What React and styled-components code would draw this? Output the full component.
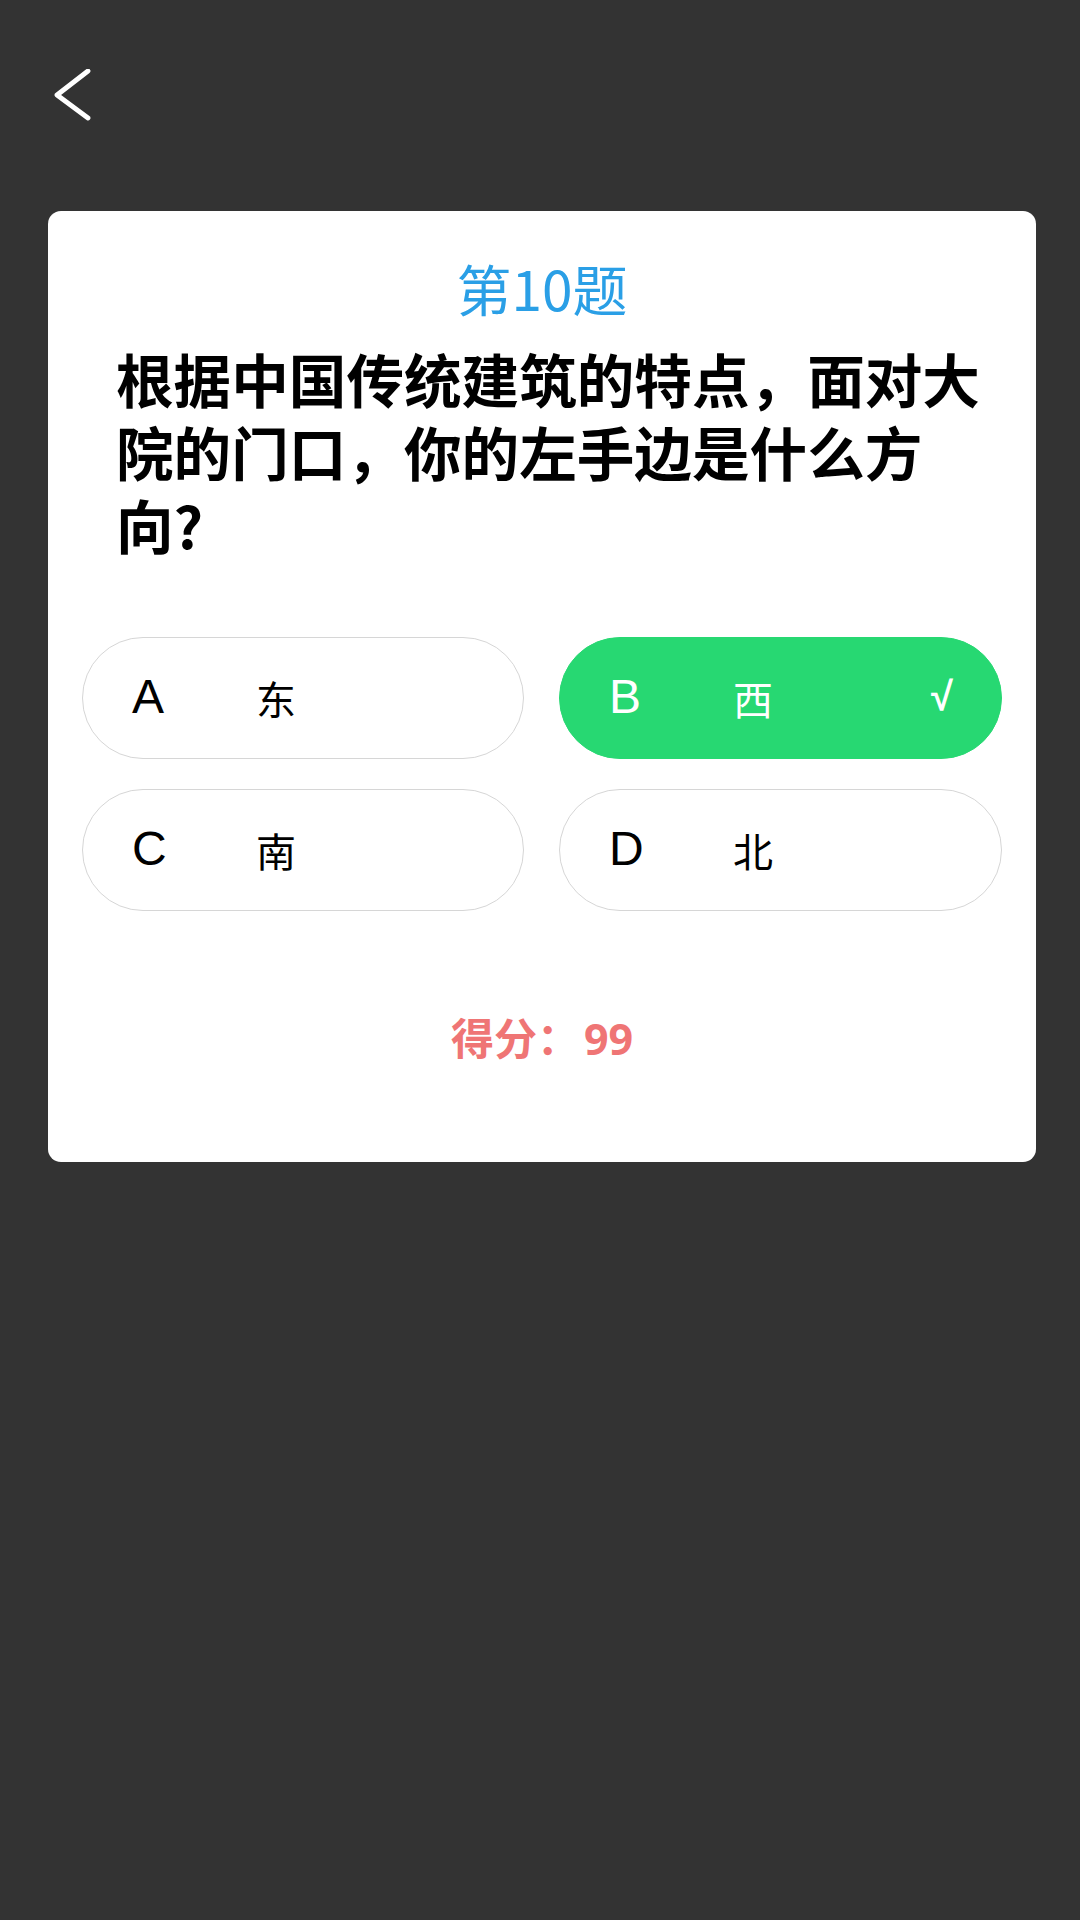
import styled, { createGlobalStyle } from 'styled-components';

const options = [
  { key: 'A', text: '东' },
  { key: 'B', text: '西', chosen: true },
  { key: 'C', text: '南' },
  { key: 'D', text: '北' },
];

export default function App() {
  return (
    <>
      <GlobalStyle />
      <Style.Page>
        <Style.Header>
          <Style.BackButton aria-label="返回">
            <svg width="40" height="52" viewBox="0 0 40 52">
              <polyline
                points="36,2 5,26 36,49"
                fill="none"
                stroke="#ffffff"
                strokeWidth="4.8"
                strokeLinecap="round"
                strokeLinejoin="round"
              />
            </svg>
          </Style.BackButton>
        </Style.Header>
        <Style.Card>
          <Style.Title>第10题</Style.Title>
          <Style.Question>根据中国传统建筑的特点，面对大院的门口，你的左手边是什么方向?</Style.Question>
          <Style.OptionGrid>
            {options.map((option) => (
              <Style.Option key={option.key} $chosen={option.chosen}>
                <Style.Letter>{option.key}</Style.Letter>
                <Style.OptionText>{option.text}</Style.OptionText>
                {option.chosen && <Style.Check>√</Style.Check>}
              </Style.Option>
            ))}
          </Style.OptionGrid>
          <Style.Score>
            得分：<Style.ScoreNumber>99</Style.ScoreNumber>
          </Style.Score>
        </Style.Card>
      </Style.Page>
    </>
  );
}

const GlobalStyle = createGlobalStyle`
  html, body {
    margin: 0;
    padding: 0;
    background-color: #333333;
  }
  body {
    font-family: "Noto Sans CJK SC", "Noto Sans", sans-serif;
  }
`;

const Style = {
  Page: styled.div`
    display: flex;
    flex-direction: column;
    width: 1080px;
    min-height: 1920px;
    background-color: #333333;
  `,
  Header: styled.div`
    display: flex;
    align-items: flex-start;
    box-sizing: border-box;
    height: 211px;
    padding: 69px 0 0 52px;
  `,
  BackButton: styled.button`
    display: flex;
    padding: 0;
    border: none;
    background: none;
    cursor: pointer;
  `,
  Card: styled.div`
    display: flex;
    flex-direction: column;
    align-items: stretch;

    margin: 0 44px 0 48px;
    padding: 44px 34px 97px;
    border-radius: 13px;
    background-color: #ffffff;
  `,
  Title: styled.div`
    height: 65px;
    line-height: 65px;
    font-size: 55px;
    text-align: center;
    color: #2a9fe6;
  `,
  Question: styled.div`
    width: 880px;
    margin: 22px 0 0 34px;
    font-size: 57.6px;
    line-height: 73px;
    font-weight: bold;
    color: #000000;
  `,
  OptionGrid: styled.div`
    display: grid;
    grid-template-columns: 442px 443px;
    column-gap: 35px;
    row-gap: 30px;
    margin-top: 76px;
  `,
  Option: styled.div`
    display: flex;
    align-items: center;
    box-sizing: border-box;
    height: 122px;
    padding: 0 48px 0 49px;

    border: 1px solid ${(p) => (p.$chosen ? '#27d872' : '#d6d6d6')};
    border-radius: 61px;
    background-color: ${(p) => (p.$chosen ? '#27d872' : '#ffffff')};
    color: ${(p) => (p.$chosen ? '#ffffff' : '#000000')};
  `,
  Letter: styled.span`
    width: 124px;
    margin-top: -4px;
    font-family: "Liberation Sans", Arial, sans-serif;
    font-size: 48px;
  `,
  OptionText: styled.span`
    flex: 1;
    font-size: 40px;
  `,
  Check: styled.span`
    margin-top: -4px;
    font-family: "Liberation Sans", Arial, sans-serif;
    font-size: 40px;
    font-weight: bold;
  `,
  Score: styled.div`
    margin-top: 99px;
    line-height: 53px;
    font-size: 43px;
    font-weight: bold;
    text-align: center;
    color: #ef7575;
  `,
  ScoreNumber: styled.span`
    font-family: "Open Sans", "Noto Sans", sans-serif;
    margin-left: 4px;
  `,
};
